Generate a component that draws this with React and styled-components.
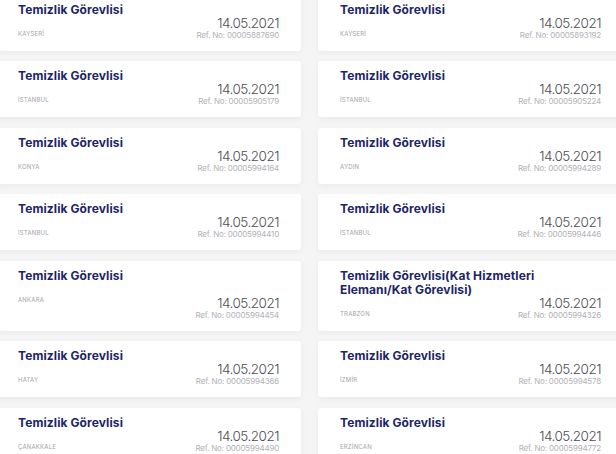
import React from "react";
import styled, { createGlobalStyle } from "styled-components";

const GlobalStyle = createGlobalStyle`
  html, body {
    margin: 0;
    padding: 0;
    background: #f5f5f6;
    overflow: hidden;
  }
  body {
    font-family: "Inter", "Noto Sans", sans-serif;
  }
`;

const Page = styled.div`
  width: 627px;
  margin: -5.5px 0 0 -4px;
  display: grid;
  grid-template-columns: 305px 305px;
  column-gap: 17px;
  row-gap: 10.5px;
`;

const Card = styled.div`
  background: #fff;
  border-radius: 3px;
  box-shadow: 0 2px 6px rgba(20, 30, 60, 0.05);
  padding: 8px 22px 10px 22px;
  display: grid;
  grid-template-columns: 1fr auto;
  grid-template-rows: auto 1fr;
  box-sizing: border-box;
`;

const Title = styled.div`
  grid-column: 1 / -1;
  max-width: 232px;
  font-weight: 700;
  font-size: 12px;
  line-height: 14px;
  color: #1c2566;
  letter-spacing: 0.1px;
`;

const City = styled.div`
  align-self: start;
  margin-top: 11px;
  font-size: 6px;
  line-height: 12px;
  text-transform: uppercase;
  color: #a3a3a8;
  letter-spacing: 0.2px;
`;

const Meta = styled.div`
  align-self: end;
  display: flex;
  flex-direction: column;
  align-items: flex-end;
`;

const DateText = styled.div`
  font-weight: 300;
  font-size: 13.5px;
  line-height: 12px;
  letter-spacing: -0.5px;
  color: #4d4d53;
`;

const RefNo = styled.div`
  font-size: 8px;
  line-height: 12px;
  letter-spacing: -0.2px;
  color: #b1b1b6;
`;

const jobs = [
  { title: "Temizlik Görevlisi", city: "Kayseri", ref: "00005887690" },
  { title: "Temizlik Görevlisi", city: "Kayseri", ref: "00005893192" },
  { title: "Temizlik Görevlisi", city: "İstanbul", ref: "00005905179" },
  { title: "Temizlik Görevlisi", city: "İstanbul", ref: "00005905224" },
  { title: "Temizlik Görevlisi", city: "Konya", ref: "00005994164" },
  { title: "Temizlik Görevlisi", city: "Aydın", ref: "00005994289" },
  { title: "Temizlik Görevlisi", city: "İstanbul", ref: "00005994410" },
  { title: "Temizlik Görevlisi", city: "İstanbul", ref: "00005994446" },
  { title: "Temizlik Görevlisi", city: "Ankara", ref: "00005994454" },
  {
    title: "Temizlik Görevlisi(Kat Hizmetleri Elemanı/Kat Görevlisi)",
    city: "Trabzon",
    ref: "00005994326",
  },
  { title: "Temizlik Görevlisi", city: "Hatay", ref: "00005994366" },
  { title: "Temizlik Görevlisi", city: "İzmir", ref: "00005994578" },
  { title: "Temizlik Görevlisi", city: "Çanakkale", ref: "00005994490" },
  { title: "Temizlik Görevlisi", city: "Erzincan", ref: "00005994772" },
];

function App() {
  return (
    <>
      <GlobalStyle />
      <Page>
        {jobs.map((job) => (
          <Card key={job.ref}>
            <Title>{job.title}</Title>
            <City>{job.city.toLocaleUpperCase("tr-TR")}</City>
            <Meta>
              <DateText>14.05.2021</DateText>
              <RefNo>Ref. No: {job.ref}</RefNo>
            </Meta>
          </Card>
        ))}
      </Page>
    </>
  );
}

export default App;
